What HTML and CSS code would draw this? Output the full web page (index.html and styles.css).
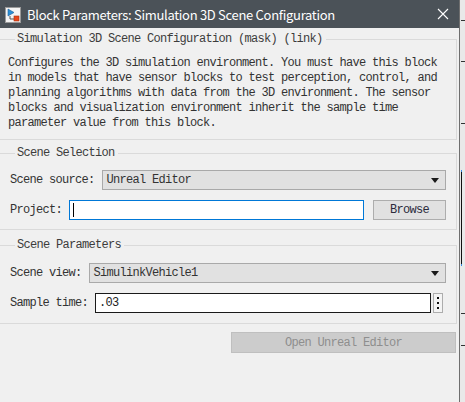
FILE: index.html
```html
<!DOCTYPE html>
<html>
<head>
<meta charset="utf-8">
<link rel="stylesheet" href="styles.css">
</head>
<body>
<div class="screen">
  <div class="window">
    <div class="titlebar">
      <svg class="app-icon" width="16" height="16" viewBox="0 0 16 16">
        <rect x="0.5" y="0.5" width="15" height="15" fill="#f4f4f4" stroke="#9a9a9a"/>
        <path d="M3 2 L9 5.5 L3 9 Z" fill="#2a8fd6" stroke="#1c5f99" stroke-width="0.6"/>
        <path d="M5 9 V12 H9" fill="none" stroke="#555" stroke-width="1"/>
        <rect x="9" y="9" width="5" height="5" fill="#e8471a" stroke="#a8300e" stroke-width="0.6"/>
      </svg>
      <span class="title-text">Block Parameters: Simulation 3D Scene Configuration</span>
      <svg class="close" width="12" height="12" viewBox="0 0 12 12">
        <path d="M1 1 L11 11 M11 1 L1 11" stroke="#ffffff" stroke-width="1.1"/>
      </svg>
    </div>

    <fieldset class="group group-desc">
      <legend>Simulation 3D Scene Configuration (mask) (link)</legend>
      <p class="desc">Configures the 3D simulation environment. You must have this block<br>in models that have sensor blocks to test perception, control, and<br>planning algorithms with data from the 3D environment. The sensor<br>blocks and visualization environment inherit the sample time<br>parameter value from this block.</p>
    </fieldset>

    <fieldset class="group group-sel">
      <legend>Scene Selection</legend>
      <div class="row">
        <span class="label">Scene source:</span>
        <div class="select"><span>Unreal Editor</span><span class="arrow"></span></div>
      </div>
      <div class="row row-project">
        <span class="label">Project:</span>
        <div class="input input-focus"><span class="caret"></span></div>
        <div class="btn btn-browse">Browse</div>
      </div>
    </fieldset>

    <fieldset class="group group-par">
      <legend>Scene Parameters</legend>
      <div class="row">
        <span class="label">Scene view:</span>
        <div class="select"><span>SimulinkVehicle1</span><span class="arrow"></span></div>
      </div>
      <div class="row row-sample">
        <span class="label">Sample time:</span>
        <div class="input input-dark"><span>.03</span></div>
        <div class="dots"><i></i><i></i><i></i></div>
      </div>
    </fieldset>

    <div class="actions">
      <div class="btn btn-disabled">Open Unreal Editor</div>
    </div>
  </div>
  <div class="strip">
    <div class="tick t1"></div>
    <div class="tick t2"></div>
    <div class="tick t3"></div>
    <div class="vline"></div>
    <div class="tick t4"></div>
    <div class="tick t5"></div>
  </div>
</div>
</body>
</html>
```

FILE: styles.css
```css
* { box-sizing: border-box; }
html, body { margin: 0; padding: 0; }
body {
  width: 465px;
  height: 402px;
  overflow: hidden;
  background: #f0f0f0;
  font-family: "Liberation Mono", "DejaVu Sans Mono", monospace;
  font-size: 12px;
  letter-spacing: -0.7px;
  color: #333333;
}
.screen { display: flex; height: 402px; }
.window {
  width: 460px;
  height: 402px;
  background: #f0f0f0;
  border-right: 1px solid #6f6f6f;
  display: flex;
  flex-direction: column;
}
.titlebar {
  height: 28px;
  background: #4b5258;
  display: flex;
  align-items: center;
  padding-left: 5px;
  flex-shrink: 0;
}
.app-icon { flex-shrink: 0; margin-top: 1px; }
.title-text {
  margin-left: 6px;
  font-family: "Noto Sans CJK SC", "Noto Sans", sans-serif;
  font-size: 13px;
  letter-spacing: -0.3px;
  color: #ffffff;
  flex: 1;
}
.close { margin-right: 10px; }

.group {
  margin: 0;
  border: 1px solid #dadada;
  border-left: none;
  margin-right: 2px;
  padding: 0 10px 0 8px;
  min-width: 0;
}
.group legend {
  padding: 0 3px 0 2px;
  margin-left: 7px;
  line-height: 15px;
  color: #3c3c3c;
}
.group-desc { margin-top: 4px; padding-bottom: 8px; }
.desc {
  margin: 9px 0 0 0;
  line-height: 15px;
  white-space: nowrap;
}
.group-sel { margin-top: 6px; padding-top: 9px; padding-bottom: 9px; }
.group-par { margin-top: 8px; padding-top: 10px; padding-bottom: 10px; }

.row {
  display: flex;
  align-items: center;
  gap: 7px;
  height: 20px;
  padding-left: 2px;
}
.row + .row { margin-top: 10px; }
.label { white-space: nowrap; }
.select {
  flex: 1;
  height: 20px;
  background: #e1e1e1;
  border: 1px solid #a9a9a9;
  display: flex;
  align-items: center;
  justify-content: space-between;
  padding: 0 6px 0 4px;
}
.arrow {
  width: 0; height: 0;
  border-left: 4px solid transparent;
  border-right: 4px solid transparent;
  border-top: 5px solid #1a1a1a;
}
.input {
  flex: 1;
  height: 20px;
  background: #ffffff;
  display: flex;
  align-items: center;
  padding-left: 3px;
}
.input-focus { border: 1px solid #0078d7; }
.caret { width: 1px; height: 14px; background: #000; }
.input-dark { border: 1px solid #1a1a1a; color: #222; }
.btn {
  height: 20px;
  background: #e1e1e1;
  border: 1px solid #adadad;
  display: flex;
  align-items: center;
  justify-content: center;
}
.btn-browse { width: 73px; margin-left: 2px; color: #2b2b3c; }
.row-sample { padding-right: 3px; gap: 7px; }
.row-sample .dots { margin-left: -5px; }
.dots {
  width: 10px;
  height: 20px;
  border: 1px solid #adadad;
  background: #f4f4f4;
  display: flex;
  flex-direction: column;
  align-items: center;
  justify-content: center;
  gap: 3px;
}
.dots i { display: block; width: 2px; height: 2px; background: #111; }

.actions {
  display: flex;
  justify-content: flex-end;
  padding: 8px 3px 0 0;
}
.btn-disabled {
  width: 225px;
  height: 21px;
  background: #cccccc;
  border: 1px solid #bfbfbf;
  color: #8e8e8e;
}

.strip {
  flex: 1;
  position: relative;
  background: #e9e9e9;
}
.tick { position: absolute; left: 1px; width: 4px; height: 1px; background: #333; }
.t1 { top: 20px; } .t2 { top: 61px; } .t3 { top: 123px; }
.t4 { top: 313px; } .t5 { top: 345px; }
.vline {
  position: absolute;
  left: 1px; top: 170px;
  width: 1px; height: 96px;
  background: #111;
  border-top: 2px solid #3a8ee6;
  border-bottom: 2px solid #3a8ee6;
}
```
